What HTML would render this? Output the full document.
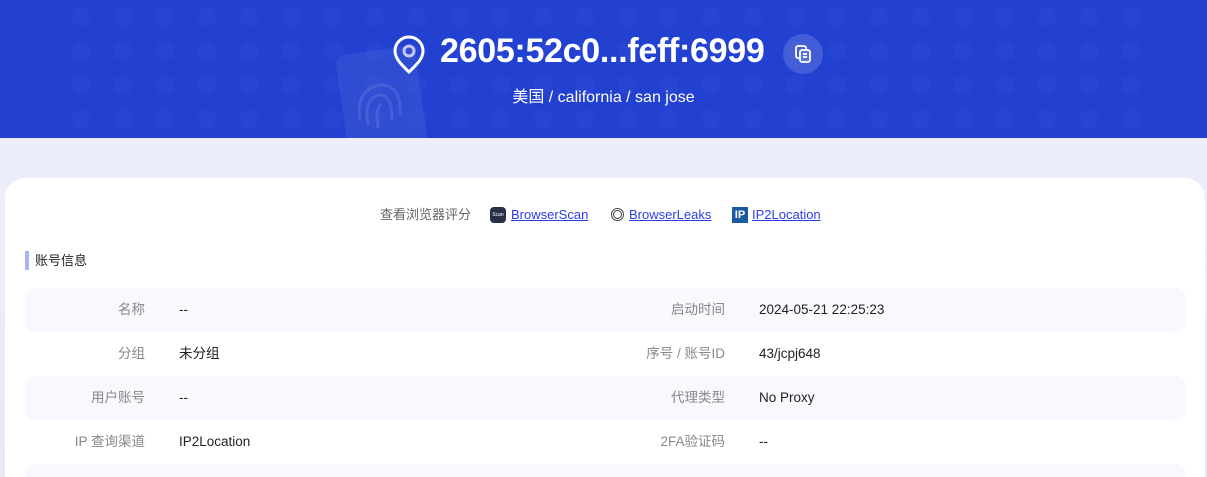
<!DOCTYPE html>
<html><head><meta charset="utf-8"><style>
*{margin:0;padding:0;box-sizing:border-box}
html,body{width:1207px;height:477px;overflow:hidden}
body{background:linear-gradient(180deg,#eef1fb,#e6eaf8);font-family:"Liberation Sans","Noto Sans CJK SC",sans-serif;position:relative}
.hdr{position:absolute;left:0;top:0;width:1207px;height:138px;background:#2241d1;overflow:hidden}
.dots{position:absolute;left:60px;top:0;width:1100px;height:138px;background-image:radial-gradient(circle,rgba(255,255,255,.025) 9px,transparent 10px);background-size:42px 34px}
.ip{position:absolute;left:440px;top:32px;color:#fff;font-weight:bold;font-size:34px;letter-spacing:-.3px}
.loc{position:absolute;left:0;width:1207px;top:83px;text-align:center;color:#fff;font-size:16px}
.copy{position:absolute;left:783px;top:34px;width:40px;height:40px;border-radius:50%;background:rgba(255,255,255,.15)}
.card{position:absolute;left:5px;top:178px;width:1200px;height:299px;background:#fff;border-radius:20px 20px 0 0}
.links{position:absolute;left:0;top:206px;width:1207px;height:18px;font-size:13px;color:#666;line-height:18px}
.links>*{position:absolute;top:0}
.links a{color:#2d3ee6;text-decoration:underline}
.sec{position:absolute;left:25px;top:251px;height:19px;border-left:4px solid #a4b4f7;padding-left:6px;font-size:13px;color:#222;line-height:19px}
.row{position:absolute;left:25px;width:1160px;height:44px;border-radius:8px;font-size:13.5px;line-height:44px;color:#222}
.row.s{background:#f8f9fe}
.l{position:absolute;text-align:right;color:#888}
.row span{position:absolute}
</style></head><body>
<div class="hdr"><div class="dots"></div>
<svg style="position:absolute;left:330px;top:40px" width="110" height="98" viewBox="0 0 110 98"><rect x="10" y="10" width="80" height="100" rx="10" fill="rgba(255,255,255,.06)" transform="rotate(-8 50 50)"/><g fill="none" stroke="rgba(255,255,255,.1)" stroke-width="3"><path d="M30 80 Q25 50 50 45 Q72 45 70 75"/><path d="M38 85 Q33 58 50 55 Q62 55 62 80"/><path d="M48 88 Q45 65 52 65"/></g></svg>
<svg style="position:absolute;left:392px;top:35px" width="34" height="40" viewBox="0 0 34 40"><path d="M17 37 C10 30 3 24 3 16 A14 14 0 0 1 31 16 C31 24 24 30 17 37Z" fill="none" stroke="#fff" stroke-width="3"/><circle cx="17" cy="16" r="5" fill="none" stroke="rgba(255,255,255,.7)" stroke-width="3"/></svg>
<div class="ip">2605:52c0...feff:6999</div>
<div class="copy"><svg style="position:absolute;left:10px;top:10px" width="20" height="20" viewBox="0 0 20 20" fill="none" stroke="#fff" stroke-width="1.8"><rect x="3" y="2" width="10" height="12" rx="2"/><rect x="7" y="6" width="10" height="12" rx="2" fill="#5a73dc"/><path d="M10 10h4M10 13h4"/></svg></div>
<div class="loc">美国 / california / san jose</div>
</div>
<div class="card"></div>
<div class="links"><span style="left:380px">查看浏览器评分</span>
<span style="left:490px;top:1px;width:16px;height:16px;background:#2a2f45;border-radius:4px;color:#fff;font-size:5px;line-height:16px;text-align:center">Scan</span>
<a style="left:511px">BrowserScan</a>
<span style="left:611px;top:2px;width:13px;height:13px;border-radius:50%;border:3px double #444"></span>
<a style="left:629px">BrowserLeaks</a>
<span style="left:732px;top:1px;width:16px;height:16px;background:#1b5aa0;color:#fff;font-weight:bold;font-size:11px;line-height:16px;text-align:center">IP</span>
<a style="left:752px">IP2Location</a></div>
<div class="sec">账号信息</div>
<div class="row s" style="top:288px"><span class="l" style="right:1040px">名称</span><span style="left:154px">--</span><span class="l" style="right:460px">启动时间</span><span style="left:734px">2024-05-21 22:25:23</span></div>
<div class="row" style="top:332px"><span class="l" style="right:1040px">分组</span><span style="left:154px">未分组</span><span class="l" style="right:460px">序号 / 账号ID</span><span style="left:734px">43/jcpj648</span></div>
<div class="row s" style="top:376px"><span class="l" style="right:1040px">用户账号</span><span style="left:154px">--</span><span class="l" style="right:460px">代理类型</span><span style="left:734px">No Proxy</span></div>
<div class="row" style="top:420px"><span class="l" style="right:1040px">IP 查询渠道</span><span style="left:154px">IP2Location</span><span class="l" style="right:460px">2FA验证码</span><span style="left:734px">--</span></div>
<div class="row s" style="top:464px;height:13px;border-radius:8px 8px 0 0"></div>
</body></html>
